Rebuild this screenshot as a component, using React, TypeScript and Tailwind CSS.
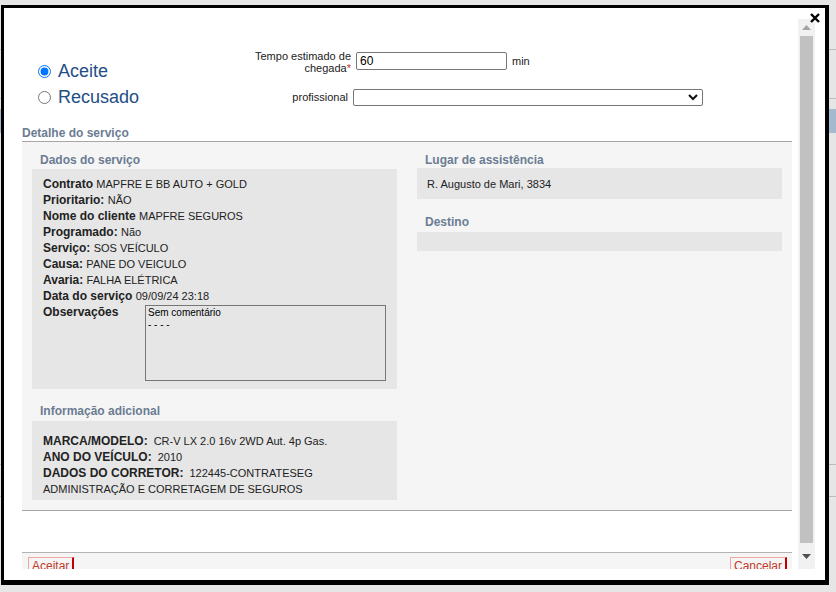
const Row = ({ label, value }: { label: string; value: string }) => (
  <div className="h-[16px] text-[12px] leading-[16px] text-[#222]">
    <span className="font-bold leading-[16px]">{label}</span>{" "}
    <span className="text-[11px] leading-[16px]">{value}</span>
  </div>
);

const InfoRow = ({ label, value }: { label: string; value: string }) => (
  <div className="h-[16px] text-[12px] leading-[16px] text-[#222]">
    <span className="font-bold leading-[16px]">{label}</span>
    <span className="ml-[6px] text-[11px] leading-[16px]">{value}</span>
  </div>
);

const SectionTitle = ({ children, className = "" }: { children: React.ReactNode; className?: string }) => (
  <div className={`pl-[8px] text-[12px] font-bold leading-[14px] text-[#6b7c93] ${className}`}>{children}</div>
);

const App = () => {
  return (
    <div className="relative h-[592px] w-[836px] overflow-hidden bg-[#e6e6e6] font-['Liberation_Sans',Arial,sans-serif]">
      {/* page behind the modal */}
      <div className="flex flex-col">
        <div className="h-[49px]" />
        <div className="h-px bg-[#bdbdbd]" />
        <div className="h-[48px]" />
        <div className="h-px bg-[#bdbdbd]" />
        <div className="h-[10px]" />
        <div className="h-[24px] bg-[#a4b9cd]" />
        <div className="h-[331px]" />
        <div className="h-px bg-[#bdbdbd]" />
        <div className="h-[31px]" />
        <div className="h-px bg-[#bdbdbd]" />
      </div>

      {/* modal */}
      <div className="absolute left-[1px] top-[5px] h-[580px] w-[828px] border-[3px] border-b-[5px] border-r-[4px] border-black bg-white">
        <button className="absolute right-[5px] top-[5px]">
          <svg width="10" height="10" viewBox="0 0 10 10">
            <path d="M1 1 L9 9 M9 1 L1 9" stroke="#000" strokeWidth="2.4" />
          </svg>
        </button>

        <div className="mt-[11px] flex h-[550px] w-[811px]">
          <div className="h-[550px] flex-1 overflow-hidden">
            {/* top form */}
            <div className="flex h-[107px]">
              <div className="w-[236px] pl-[34px] pt-[39px]">
                <label className="flex h-[26px] items-center gap-[7px] text-[18px] text-[#234e86]">
                  <input type="radio" name="st" defaultChecked className="m-0 h-[13px] w-[13px]" />
                  Aceite
                </label>
                <label className="flex h-[26px] items-center gap-[7px] text-[18px] text-[#234e86]">
                  <input type="radio" name="st" className="m-0 h-[13px] w-[13px]" />
                  Recusado
                </label>
              </div>
              <div className="pt-[31px]">
                <div className="flex items-start">
                  <div className="w-[111px] text-right text-[11px] leading-[12px] text-[#222]">
                    Tempo estimado de
                    <br />
                    chegada<span className="text-[#c0392b]">*</span>
                  </div>
                  <input
                    defaultValue="60"
                    className="ml-[5px] mt-[2px] h-[18px] w-[151px] rounded-[2px] border border-[#767676] px-[3px] text-[12px] text-black"
                  />
                  <span className="ml-[5px] mt-[5px] text-[11px] leading-[12px] text-[#222]">min</span>
                </div>
                <div className="mt-[15px] flex items-center">
                  <div className="w-[108px] text-right text-[11px] text-[#222]">profissional</div>
                  <div className="ml-[5px] flex h-[17px] w-[350px] items-center justify-end rounded-[2px] border border-[#767676] pr-[4px]">
                    <svg width="10" height="7" viewBox="0 0 10 7">
                      <path d="M1 1 L5 5 L9 1" stroke="#111" strokeWidth="2" fill="none" />
                    </svg>
                  </div>
                </div>
              </div>
            </div>

            {/* detail */}
            <div className="ml-[18px] w-[770px]">
              <div className="h-[16px] border-b border-[#a6a6a6] text-[12px] font-bold leading-[14px] text-[#6b7c93]">
                Detalhe do serviço
              </div>
              <div className="flex h-[369px] border-b border-[#a6a6a6] bg-[#f5f5f5] pt-[11px]">
                <div className="ml-[10px] w-[365px]">
                  <SectionTitle>Dados do serviço</SectionTitle>
                  <div className="mt-[2px] h-[220px] bg-[#e6e6e6] pl-[11px] pt-[7px]">
                    <Row label="Contrato" value="MAPFRE E BB AUTO + GOLD" />
                    <Row label="Prioritario:" value="NÃO" />
                    <Row label="Nome do cliente" value="MAPFRE SEGUROS" />
                    <Row label="Programado:" value="Não" />
                    <Row label="Serviço:" value="SOS VEÍCULO" />
                    <Row label="Causa:" value="PANE DO VEICULO" />
                    <Row label="Avaria:" value="FALHA ELÉTRICA" />
                    <Row label="Data do serviço" value="09/09/24 23:18" />
                    <div className="flex">
                      <div className="w-[102px] text-[12px] font-bold leading-[16px] text-[#222]">Observações</div>
                      <div className="mt-[1px] h-[76px] w-[241px] border border-[#767676] px-[2px] py-[1px] text-[10px] leading-[12px] text-black">
                        Sem comentário
                        <br />- - - -
                      </div>
                    </div>
                  </div>
                  <SectionTitle className="mt-[15px]">Informação adicional</SectionTitle>
                  <div className="mt-[3px] h-[79px] bg-[#e6e6e6] pl-[11px] pr-[10px] pt-[12px]">
                    <InfoRow label="MARCA/MODELO:" value="CR-V LX 2.0 16v 2WD Aut. 4p Gas." />
                    <InfoRow label="ANO DO VEÍCULO:" value="2010" />
                    <InfoRow label="DADOS DO CORRETOR:" value="122445-CONTRATESEG" />
                    <div className="text-[11px] leading-[16px] text-[#222]">ADMINISTRAÇÃO E CORRETAGEM DE SEGUROS</div>
                  </div>
                </div>
                <div className="ml-[20px] w-[365px]">
                  <SectionTitle>Lugar de assistência</SectionTitle>
                  <div className="mt-[1px] flex h-[31px] items-center bg-[#e6e6e6] pl-[10px] pt-[1px] text-[11px] text-[#222]">
                    R. Augusto de Mari, 3834
                  </div>
                  <SectionTitle className="mt-[16px]">Destino</SectionTitle>
                  <div className="mt-[3px] h-[19px] bg-[#e6e6e6]" />
                </div>
              </div>
              <div className="h-[41px]" />
              <div className="flex h-[40px] justify-between border-t border-[#b3b3b3] bg-[#f5f5f5] px-[6px] pt-[4px]">
                <button className="h-[18px] border-b-2 border-l border-r-2 border-t border-b-[#c00000] border-l-[#f3a5a5] border-r-[#c00000] border-t-[#f3a5a5] px-[3px] text-[12px] leading-[14px] text-[#c0392b]">
                  Aceitar
                </button>
                <button className="mr-[-1px] h-[18px] border-b-2 border-l border-r-2 border-t border-b-[#c00000] border-l-[#f3a5a5] border-r-[#c00000] border-t-[#f3a5a5] px-[3px] text-[12px] leading-[14px] text-[#c0392b]">
                  Cancelar
                </button>
              </div>
            </div>
          </div>

          {/* scrollbar */}
          <div className="flex h-[550px] w-[17px] flex-col items-center bg-[#f1f1f1]">
            <div className="flex h-[17px] items-center justify-center">
              <svg width="9" height="5" viewBox="0 0 9 5">
                <path d="M0 5 L4.5 0 L9 5 Z" fill="#a3a3a3" />
              </svg>
            </div>
            <div className="h-[507px] w-[13px] bg-[#c1c1c1]" />
            <div className="flex h-[26px] items-center justify-center">
              <svg width="9" height="5" viewBox="0 0 9 5">
                <path d="M0 0 L9 0 L4.5 5 Z" fill="#505050" />
              </svg>
            </div>
          </div>
        </div>
      </div>
    </div>
  );
};

export default App;
